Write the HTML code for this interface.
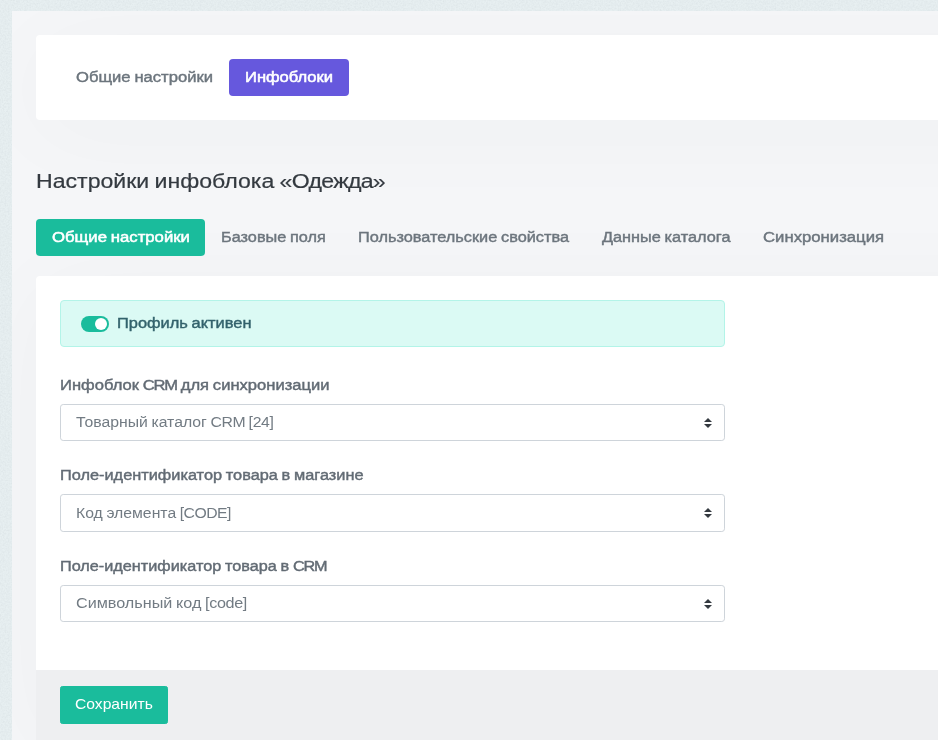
<!DOCTYPE html>
<html lang="ru">
<head>
<meta charset="utf-8">
<title>Настройки инфоблока «Одежда»</title>
<style>
*{box-sizing:border-box}
html,body{margin:0;padding:0;width:938px;height:740px;overflow:hidden}
body{background:#e7eff1;font-family:"Liberation Sans",sans-serif;font-size:14px;line-height:21px;color:#6c757d;position:relative}
.noise{position:absolute;left:0;top:0}
.sx{display:inline-block;white-space:nowrap;word-spacing:-.7px;transform-origin:0 50%;transform:scaleX(var(--s,1))}
.workarea{position:absolute;left:12px;top:11px;width:1400px;height:900px;background:#f5f6f8;padding:24px 24px 0 24px;overflow:hidden}
.card{background:#fff;border-radius:4px;width:1352px;box-shadow:0 12px 96px rgba(56,65,74,.03)}
.card-top{height:85px;padding:24px}
.nav{display:flex;margin:0;padding:0;list-style:none}
.nav li{height:37px;padding:8px 16px;font-weight:400;-webkit-text-stroke-width:.4px;border-radius:4px;white-space:nowrap}
.nav li.act-p{background:#6658dd;color:#fff;-webkit-text-stroke-width:.5px}
.nav li.act-s{background:#1abc9c;color:#fff;-webkit-text-stroke-width:.5px}
h4 .sx{word-spacing:-1px}
h4{margin:50px 0 0 0;height:22px;line-height:22px;font-size:20px;font-weight:400;color:#343a40;-webkit-text-stroke-width:.2px;white-space:nowrap}
.tabs{margin-top:27px}
.card-main{margin-top:20px}
.card-body{padding:24px 24px 0 24px;height:394.4px}
.col{width:665px}
.alert{height:47px;border:1px solid #b3f4e8;background:#dbfaf4;border-radius:4px;padding:12px 20px 10px;position:relative;color:#33626c;font-weight:400;-webkit-text-stroke-width:.4px}
.switch{position:absolute;left:20px;top:14.5px;width:28px;height:16px;border-radius:8px;background:#1abc9c}
.switch i{position:absolute;left:14px;top:2px;width:12px;height:12px;border-radius:6px;background:#fff}
.alert label{display:block;margin:0 0 0 36.2px;height:21px}
.fg{margin-top:28px}
.fg + .fg{margin-top:24px}
.fg label{display:block;height:21px;color:#626b74;font-weight:400;-webkit-text-stroke-width:.4px;margin:0 0 8px 0;white-space:nowrap}
.select{position:relative;height:37.4px;border:1px solid #ced4da;border-radius:3.2px;background:#fff;padding:7.2px 14.4px 7.2px 15px;color:#727b83;white-space:nowrap}
.select svg{position:absolute;right:12px;top:13px;width:8px;height:10px}
.card-footer{height:70px;background:#eeeff1;padding:16px 24px}
.btn{display:block;width:108px;height:38px;border:1px solid #1abc9c;background:#1abc9c;color:#fff;border-radius:2.4px;font-family:inherit;font-size:14.4px;line-height:21.6px;padding:6.6px 14.4px 7.8px;text-align:left;margin:0}
</style>
</head>
<body>
<svg class="noise" width="938" height="740" aria-hidden="true"><filter id="nz" x="0" y="0" width="100%" height="100%"><feTurbulence type="fractalNoise" baseFrequency="0.6" numOctaves="2" seed="7"/><feColorMatrix type="matrix" values="0 0 0 0 0.5  0 0 0 0 0.55  0 0 0 0 0.58  0.28 0.28 0 0 -0.215"/></filter><rect width="938" height="740" filter="url(#nz)"/></svg>
<div class="workarea">
  <div class="card card-top">
    <ul class="nav">
      <li style="width:169px"><span class="sx" style="--s:1.1861">Общие настройки</span></li>
      <li class="act-p" style="width:120px"><span class="sx" style="--s:1.1805">Инфоблоки</span></li>
    </ul>
  </div>
  <h4><span class="sx" style="--s:1.1549">Настройки инфоблока <span class="lt" style="letter-spacing:-.6px">«Одежда»</span></span></h4>
  <ul class="nav tabs">
    <li class="act-s" style="width:169px;margin-right:.6px"><span class="sx" style="--s:1.1939">Общие настройки</span></li>
    <li style="width:136.8px"><span class="sx" style="--s:1.1624;margin-left:-.3px">Базовые поля</span></li>
    <li style="width:243.2px"><span class="sx" style="--s:1.1648">Пользовательские свойства</span></li>
    <li style="width:161.5px"><span class="sx" style="--s:1.1637">Данные каталога</span></li>
    <li style="width:152px"><span class="sx" style="--s:1.1940">Синхронизация</span></li>
  </ul>
  <div class="card card-main">
    <div class="card-body">
      <div class="col">
        <div class="alert">
          <span class="switch"><i></i></span>
          <label><span class="sx" style="--s:1.1723">Профиль активен</span></label>
        </div>
        <div class="fg">
          <label><span class="sx" style="--s:1.1838">Инфоблок <span class="lt" style="letter-spacing:-1px">CRM</span> для синхронизации</span></label>
          <div class="select"><span class="sx" style="--s:1.1272">Товарный каталог <span class="lt" style="letter-spacing:-.3px">CRM [24]</span></span><svg viewBox="0 0 4 5"><path fill="#343a40" d="M2 0L0 2h4zm0 5L0 3h4z"/></svg></div>
        </div>
        <div class="fg">
          <label><span class="sx" style="--s:1.1661">Поле-идентификатор товара в магазине</span></label>
          <div class="select"><span class="sx" style="--s:1.1256">Код элемента <span class="lt" style="letter-spacing:-.45px">[CODE]</span></span><svg viewBox="0 0 4 5"><path fill="#343a40" d="M2 0L0 2h4zm0 5L0 3h4z"/></svg></div>
        </div>
        <div class="fg">
          <label><span class="sx" style="--s:1.1605">Поле-идентификатор товара в <span class="lt" style="letter-spacing:-1px">CRM</span></span></label>
          <div class="select"><span class="sx" style="--s:1.1550">Символьный код <span class="lt" style="letter-spacing:-.3px">[code]</span></span><svg viewBox="0 0 4 5"><path fill="#343a40" d="M2 0L0 2h4zm0 5L0 3h4z"/></svg></div>
        </div>
      </div>
    </div>
    <div class="card-footer">
      <button class="btn" type="button"><span class="sx" style="--s:1.0879">Сохранить</span></button>
    </div>
  </div>
</div>
</body>
</html>
